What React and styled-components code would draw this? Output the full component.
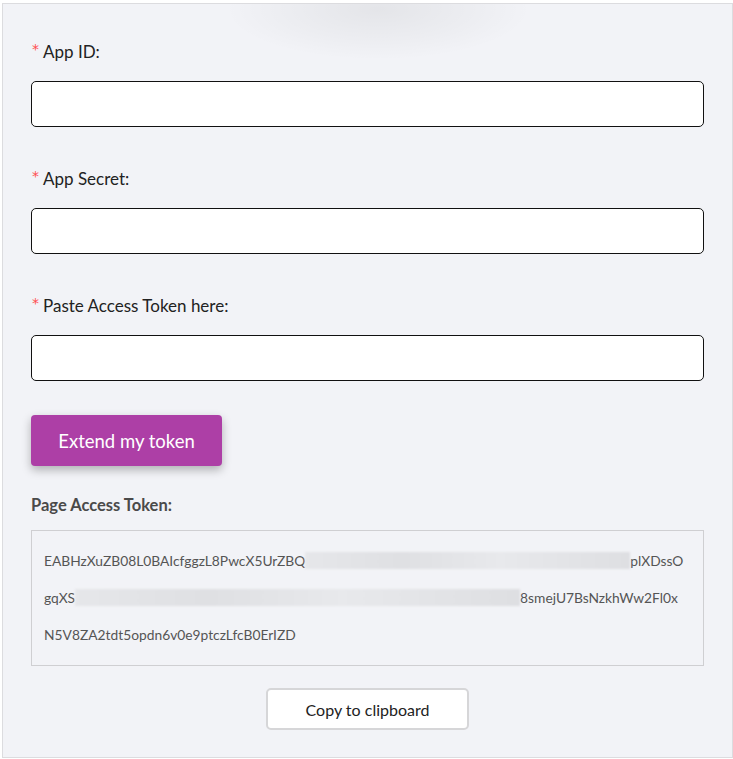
import React from "react";
import styled, { createGlobalStyle } from "styled-components";

const GlobalStyle = createGlobalStyle`
  html, body {
    margin: 0;
    padding: 0;
    background: #ffffff;
  }
  body {
    font-family: "Lato", "Noto Sans", sans-serif;
  }
`;

const Page = styled.div`
  padding: 3px 0 0 2px;
  width: 733px;
  box-sizing: border-box;
`;

const Panel = styled.div`
  position: relative;
  width: 731px;
  box-sizing: border-box;
  background: #f2f3f7;
  border: 1px solid #dcdcdf;
  padding: 37px 28px 27px;
  display: flex;
  flex-direction: column;
  overflow: hidden;

  &::before {
    content: "";
    position: absolute;
    left: 225px;
    top: -45px;
    width: 300px;
    height: 100px;
    border-radius: 50%;
    background: radial-gradient(ellipse at center, rgba(0, 0, 0, 0.06) 0%, rgba(0, 0, 0, 0.025) 45%, rgba(0, 0, 0, 0) 72%);
    pointer-events: none;
  }
`;

const Fields = styled.div`
  display: flex;
  flex-direction: column;
  gap: 41px;
  margin-bottom: 34px;
`;

const Field = styled.div`
  display: flex;
  flex-direction: column;
  gap: 20px;
`;

const Label = styled.label`
  display: flex;
  align-items: center;
  height: 20px;
  font-size: 17px;
  color: #222;
`;

const Required = styled.span`
  color: #ff4d4f;
  font-size: 14px;
  line-height: 14px;
  margin: -4px 4px 0 1px;
  font-family: "DejaVu Sans", sans-serif;
`;

const Input = styled.input`
  box-sizing: border-box;
  height: 46px;
  width: 100%;
  border: 1px solid #111;
  border-radius: 5px;
  background: #fff;
  padding: 0 12px;
  font-family: inherit;
  font-size: 15px;
  outline: none;
`;

const PrimaryButton = styled.button`
  align-self: flex-start;
  width: 191px;
  height: 51px;
  border: none;
  border-radius: 4px;
  background: #ad3fa6;
  color: #fff;
  font-family: inherit;
  font-size: 18.5px;
  box-shadow: 0 4px 10px rgba(0, 0, 0, 0.28);
  cursor: pointer;
  margin-bottom: 30px;
`;

const SectionTitle = styled.div`
  font-size: 16.5px;
  line-height: 18px;
  font-weight: 700;
  color: #4a4a4a;
  margin-bottom: 16px;
`;

const TokenBox = styled.div`
  box-sizing: border-box;
  height: 136px;
  border: 1px solid #cfcfd2;
  padding: 11px 12px 13px;
  font-size: 13.8px;
  line-height: 37px;
  color: #555;
  margin-bottom: 22px;
`;

const TokenLine = styled.div`
  white-space: nowrap;
  display: flex;
  align-items: center;
  height: 37px;
`;

const Redacted = styled.span`
  display: inline-block;
  height: 17px;
  width: ${({ $w }) => $w}px;
  background: linear-gradient(90deg, #e6e7ea, #dfe0e3 30%, #e8e9ec 60%, #dedfe2);
  filter: blur(1px);
`;

const CopyButton = styled.button`
  align-self: center;
  width: 203px;
  height: 42px;
  background: #fff;
  border: 2px solid #d6d6d8;
  border-radius: 5px;
  font-family: inherit;
  font-size: 16px;
  color: #222;
  cursor: pointer;
`;

const fields = ["App ID:", "App Secret:", "Paste Access Token here:"];

const App = () => {
  return (
    <Page>
      <GlobalStyle />
      <Panel>
        <Fields>
          {fields.map((label) => (
            <Field key={label}>
              <Label>
                <Required>*</Required>
                {label}
              </Label>
              <Input />
            </Field>
          ))}
        </Fields>
        <PrimaryButton>Extend my token</PrimaryButton>
        <SectionTitle>Page Access Token:</SectionTitle>
        <TokenBox>
          <TokenLine>
            EABHzXuZB08L0BAIcfggzL8PwcX5UrZBQ
            <Redacted $w={325} />
            plXDssO
          </TokenLine>
          <TokenLine>
            gqXS
            <Redacted $w={445} />
            8smejU7BsNzkhWw2Fl0x
          </TokenLine>
          <TokenLine>N5V8ZA2tdt5opdn6v0e9ptczLfcB0ErIZD</TokenLine>
        </TokenBox>
        <CopyButton>Copy to clipboard</CopyButton>
      </Panel>
    </Page>
  );
};

export default App;
